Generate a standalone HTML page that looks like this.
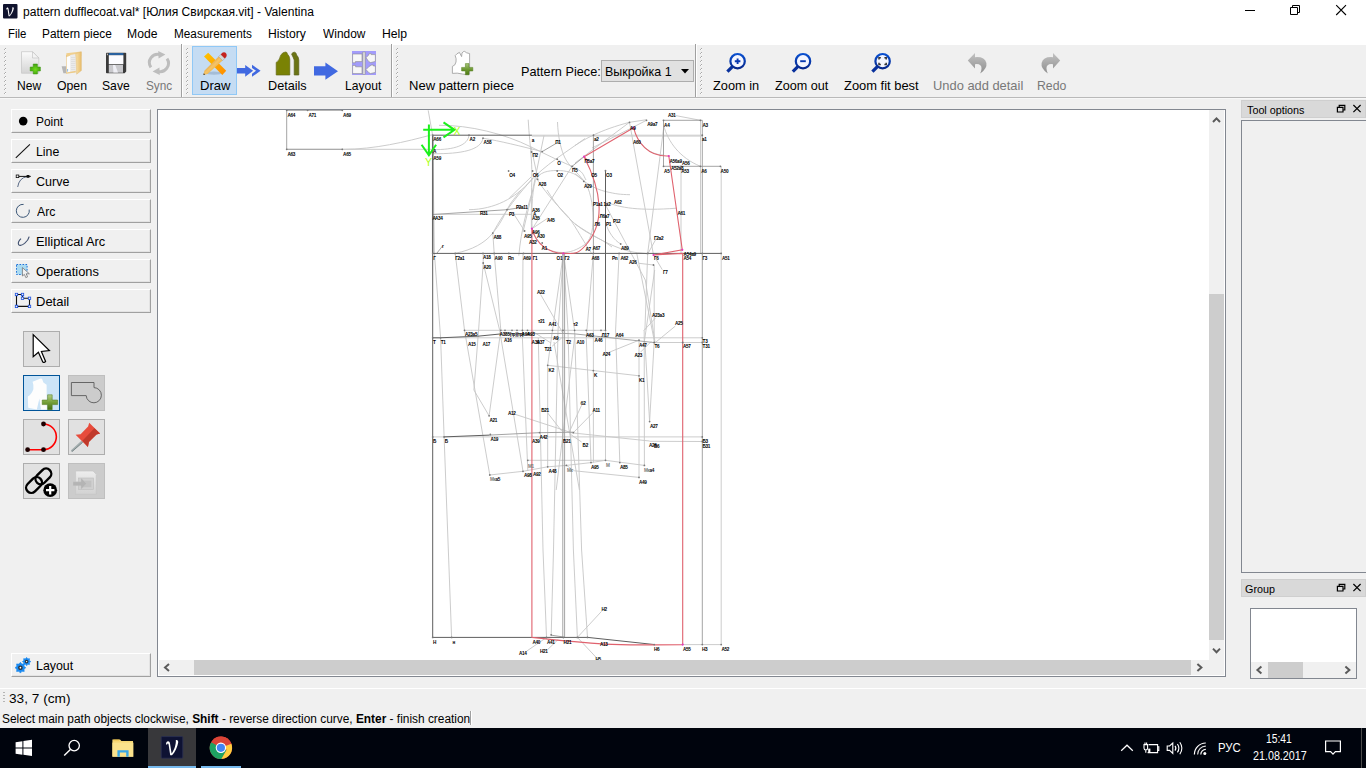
<!DOCTYPE html>
<html lang="ru">
<head>
<meta charset="utf-8">
<title>Valentina</title>
<style>
*{box-sizing:border-box;margin:0;padding:0}
html,body{width:1366px;height:768px;overflow:hidden;background:#f0f0f0}
body{position:relative;font-family:"Liberation Sans",sans-serif;color:#000;font-size:13px}
.abs{position:absolute}
.t{position:absolute;white-space:nowrap;line-height:1;display:block;transform-origin:0 0}
#titlebar{left:0;top:0;width:1366px;height:22px;background:#fff}
#menubar{left:0;top:22px;width:1366px;height:22px;background:#fff}
#tbline0{left:0;top:44px;width:1366px;height:1px;background:#fff}
#toolbar{left:0;top:45px;width:1366px;height:52px;background:#f0f0f0}
#tbline{left:0;top:97px;width:1366px;height:1px;background:#b9b9b9}
#tbline2{left:0;top:98px;width:1366px;height:1px;background:#f7f7f7}
.f12{font-size:12px}
.f13{font-size:13px}
.f11{font-size:11px}
.dis{color:#787878}
.handle{position:absolute;width:3px;top:48px;height:46px;background-image:repeating-linear-gradient(to bottom,#a8a8a8 0,#a8a8a8 1px,#fff 1px,#fff 2px,transparent 2px,transparent 4px),repeating-linear-gradient(to bottom,transparent 0,transparent 1px,#b0b0b0 1px,#b0b0b0 2px,transparent 2px,transparent 4px);background-size:1px 100%,1px 100%;background-position:1px 0,0 0;background-repeat:no-repeat}
.sep{position:absolute;top:44px;height:53px;width:2px;border-left:1px solid #a0a0a0;border-right:1px solid #fff}
.tbtn{position:absolute;left:11px;width:140px;height:24px;background:#f0f0f0;border-top:1px solid #fff;border-left:1px solid #fff;border-right:1px solid #a0a0a0;border-bottom:1px solid #a0a0a0;box-shadow:inset -1px -1px 0 #e3e3e3}
.ib{position:absolute;width:37px;height:36px;background:#e1e1e1;border:1px solid #adadad}
.ib.act{background:#cce4f7;border-color:#005499}
.ib.off{background:#cccccc;border-color:#bfbfbf}
.dockt{position:absolute;left:1241px;width:125px;height:18px;background:#d9d9d9;border:1px solid #cfcfcf}
#canvas{left:157px;top:109px;width:1069px;height:568px;background:#fff;border:1px solid #828790}
.sb{background:#f0f0f0;position:absolute}
.thumb{background:#cdcdcd;position:absolute}
#taskbar{left:0;top:728px;width:1366px;height:40px;background:#00040d}
svg{position:absolute;overflow:visible}
</style>
</head>
<body>
<div class="abs" id="titlebar"></div>
<div class="abs" id="menubar"></div>
<div class="abs" id="tbline0"></div>
<div class="abs" id="toolbar"></div>
<div class="abs" id="tbline"></div>
<div class="abs" id="tbline2"></div>

<!-- app icon -->
<svg style="left:3px;top:4px" width="15" height="15" viewBox="0 0 15 15">
  <rect x="0" y="0" width="14.5" height="14.5" rx="1" fill="#10132e"/>
  <path d="M3.2 5.2 C3.4 3.2 5.6 3 5.6 5.2 L6.6 11.6 C8 9.5 9.6 6 9.4 3.2 C10.4 3 11 3.6 10.8 4.6 C10.2 7.6 8.6 10.4 6.8 12.2 L5.6 12.2 L4.6 5.6 C4.5 4.8 3.9 4.8 3.9 5.5 Z" fill="#fff"/>
</svg>

<!-- window controls -->
<svg style="left:1240px;top:0" width="126" height="22" viewBox="0 0 126 22">
  <path d="M5 10.5H15" stroke="#000" stroke-width="1"/>
  <path d="M50.5 7.5H57.5V14.5H50.5Z M52.5 7.5V5.5H59.5V12.5H57.5" stroke="#000" stroke-width="1" fill="none"/>
  <path d="M96.2 5.2L106 15M106 5.2L96.2 15" stroke="#000" stroke-width="1.1"/>
</svg>

<!-- toolbar handles & separators -->
<div class="handle" style="left:4px"></div>
<div class="sep" style="left:181px"></div>
<div class="handle" style="left:186px"></div>
<div class="sep" style="left:391px"></div>
<div class="handle" style="left:396px"></div>
<div class="sep" style="left:695px"></div>
<div class="handle" style="left:700px"></div>

<!-- Draw button (checked) -->
<div class="abs" style="left:192px;top:46px;width:45px;height:49px;background:#c5dcf3;border:1px solid #90c8f6"></div>

<!-- combo box -->
<div class="abs" style="left:601px;top:60px;width:93px;height:22px;background:#e1e1e1;border:1px solid #adadad"></div>
<svg style="left:679.6px;top:68px" width="10" height="6" viewBox="0 0 10 6"><path d="M1 1H9L5 5.4Z" fill="#000"/></svg>
<!-- TOOLBAR ICONS -->
<svg style="left:0;top:0" width="1366" height="100" viewBox="0 0 1366 100">
<defs>
<linearGradient id="gdoc" x1="0" y1="0" x2="0" y2="1"><stop offset="0" stop-color="#fbfbfb"/><stop offset="1" stop-color="#d4d4d4"/></linearGradient>
<radialGradient id="gplus" cx=".5" cy=".55" r=".6"><stop offset="0" stop-color="#6fdc1a"/><stop offset="1" stop-color="#3f9a12"/></radialGradient>
<linearGradient id="gplus2" x1="0" y1="0" x2="0" y2="1"><stop offset="0" stop-color="#a9c77a"/><stop offset=".5" stop-color="#6f9a35"/><stop offset="1" stop-color="#4d7a12"/></linearGradient>
<linearGradient id="gfold" x1="0" y1="0" x2="1" y2="0"><stop offset="0" stop-color="#f7dfa8"/><stop offset="1" stop-color="#e9bd6a"/></linearGradient>
<linearGradient id="gpen" x1="0" y1="0" x2="1" y2="1"><stop offset="0" stop-color="#b8650c"/><stop offset=".5" stop-color="#f5c467"/><stop offset="1" stop-color="#d98a1c"/></linearGradient>
<linearGradient id="grul" x1="0" y1="0" x2="1" y2="1"><stop offset="0" stop-color="#ffc400"/><stop offset="1" stop-color="#ff8c00"/></linearGradient>
<linearGradient id="gmag" x1="0" y1="0" x2="0" y2="1"><stop offset="0" stop-color="#0a50d0"/><stop offset="1" stop-color="#06278c"/></linearGradient>
<linearGradient id="gundo" x1="0" y1="0" x2="0" y2="1"><stop offset="0" stop-color="#c2c2c2"/><stop offset="1" stop-color="#8e8e8e"/></linearGradient>
</defs>
<!-- New -->
<path d="M21.5 51.7H32.5L38.8 58V73.2H21.5Z" fill="url(#gdoc)" stroke="#c9c9c9" stroke-width=".8"/>
<path d="M32.5 51.7V58H38.8Z" fill="#f4f4f4" stroke="#bdbdbd" stroke-width=".6"/>
<path d="M33.2 64H37.4V67H40.4V71H37.4V74H33.2V71H30.2V67H33.2Z" fill="url(#gplus)" stroke="#3a9410" stroke-width=".5"/>
<!-- Open -->
<path d="M61.6 66.2 L66.4 66.2 L66.4 73.2 L63.4 73.2 Z" fill="#8f8f8f" opacity=".6"/>
<path d="M66.3 53.2 L81.2 51.6 V56 L66.3 57 Z" fill="#f0cf8e"/>
<path d="M66.3 55 L67 55 V73.4 L66.3 73.5 Z" fill="#e8c27a"/>
<path d="M66.8 57 L70.6 55.4 V72.2 L66.8 73.2 Z" fill="#fdfdfd"/>
<path d="M70.2 55 L75.8 54 V71.6 L70.2 72.6 Z" fill="#ececec"/>
<path d="M71 57.6h4.2M71 59.6h4.2M71 61.6h4.2M71 63.6h4.2M71 65.6h4.2M71 67.6h4.2M71 69.6h4.2" stroke="#d4d4d4" stroke-width=".6"/>
<path d="M66.3 72.4 L75.8 70.8 V72.6 L66.3 73.8 Z" fill="#eccb8a"/>
<path d="M75.8 53.6 L81.4 51.8 V70.6 L76.6 74.2 Z" fill="url(#gfold)" stroke="#dcb46c" stroke-width=".4"/>
<path d="M67.2 69 h.9 v2.6 l-.9 .2Z" fill="#7fb2e5"/>
<!-- Save -->
<path d="M106.8 52.8H125.4Q126.2 52.8 126.2 53.6V71.5L124.6 73.2H106.8Q106 73.2 106 72.4V53.6Q106 52.8 106.8 52.8Z" fill="#3a3a3a"/>
<rect x="108.8" y="53" width="14.6" height="2.2" fill="#2b629f"/>
<rect x="108.8" y="55.2" width="14.6" height="8.8" fill="#fcfcff"/>
<rect x="108.8" y="64" width="14.6" height=".9" fill="#6a6a6a"/>
<rect x="108.8" y="64.9" width="14.2" height="7.8" fill="#c9c9cd"/>
<path d="M113 65 L115.2 65 L118 72.6 L113.4 72.6 Z" fill="#eeeef4"/>
<rect x="106.9" y="53.6" width=".9" height="1.6" fill="#ddd"/>
<!-- Sync (disabled) -->
<g fill="none" stroke="#bdbdbd" stroke-width="3">
<path d="M150.9 67.4 A8.4 8.4 0 0 1 160.2 54.6"/>
<path d="M167 58.6 A8.4 8.4 0 0 1 157.8 71.4"/>
</g>
<path d="M158.2 51 L165.4 54.6 L158.6 58.6 Z" fill="#bdbdbd"/>
<path d="M159.8 75 L152.6 71.4 L159.4 67.4 Z" fill="#bdbdbd"/>
<!-- Draw -->
<ellipse cx="214" cy="73.2" rx="8" ry="1.6" fill="#7f97b5" opacity=".45"/>
<path d="M208.2 52.8 L226.2 70.8 L222.3 75 L204 56.6 Z" fill="url(#grul)"/>
<path d="M218.6 56.6 L222.6 60.6 L207.6 74 L203.4 75 L204.4 70.8 Z" fill="url(#gpen)"/>
<path d="M203.4 75 L203.8 73.2 L205.2 74.6 Z" fill="#222"/>
<path d="M218.6 56.6 L220.8 54.4 L224.8 58.4 L222.6 60.6 Z" fill="#d6d6d6" stroke="#8e8e8e" stroke-width=".4"/>
<path d="M220.8 54.4 Q222.6 51.6 225.2 52.6 Q227.6 54.4 226.2 57 L224.8 58.4 Z" fill="#c4221f"/>
<!-- arrow 1 -->
<path d="M237 68 H245.2 V64.9 L253.1 70.8 L245.2 76.7 V73.6 H237 Z" fill="#4169e1"/>
<path d="M252 64.8 L260.6 70.8 L252 76.8 V73.7 L256 70.8 L252 67.9 Z" fill="#4169e1"/>
<!-- Details -->
<path d="M276.2 75 V62.4 Q279.6 60.6 280.6 55.4 Q282.4 52.2 285.4 52 Q287.4 52 287.4 54 Q289.6 56 289.8 59 V75 Z" fill="#7a8204" stroke="#656b1a" stroke-width=".7"/>
<path d="M294.2 75 V60 Q293.2 57 291.6 54.2 Q292.4 52 294.6 52.2 Q296.4 52.6 296.6 55 Q298.8 57 298.8 60 V75 Z" fill="#6b7414" stroke="#5a611d" stroke-width=".7"/>
<!-- arrow 2 -->
<path d="M314 66.3 H325.4 V62.6 L338 71.2 L325.4 79.8 V75.6 H314 Z" fill="#4169e1"/>
<!-- Layout -->
<rect x="352" y="51" width="24" height="24" fill="#a39cfb"/>
<g fill="#f7f7f7" stroke="#8a8a8a" stroke-width=".6">
<path d="M352.6 54 H362 V61.6 H355.4 V62.8 H352.6 Z"/>
<path d="M352.6 65.4 H355.6 V66.8 H362 V73.6 H352.6 Z"/>
<path d="M366 57.6 L368.6 55.2 L369.2 53.6 H371.2 V54.6 H375.4 V61.4 L370.6 62.6 L368.6 61.4 Z"/>
<path d="M366 69.6 L369.2 66.4 L371.6 65 H373.4 V66 H375.4 V72.4 L370.4 73.6 L368.6 72.4 Z"/>
</g>
<rect x="362.8" y="52" width="2.4" height="22.4" fill="#d8d8d8" stroke="#8e8e8e" stroke-width=".5"/>
<!-- New pattern piece -->
<path d="M452.4 73.4 V66.4 Q455.4 65.6 456 62 Q456.6 58.6 455.2 55.6 Q456.6 53.6 459.4 52.4 L461.6 56.6 L462 53 Q463.2 51.2 464.6 51.4 Q466 53 469.6 53.6 V74.2 Q466 75 462.4 74 Q457 72.6 452.4 73.4 Z" fill="#fff" stroke="#9a9a9a" stroke-width=".8"/>
<path d="M465.4 63.6 H469 V67.4 H472.8 V71 H469 V74.8 H465.4 V71 H461.6 V67.4 H465.4 Z" fill="url(#gplus2)" stroke="#4f7a18" stroke-width=".5"/>
<!-- Zoom in -->
<g id="mag">
<path d="M732.4 66.6 L727.4 71.6" stroke="#08309c" stroke-width="3.2" stroke-linecap="butt"/>
<circle cx="737.6" cy="61.2" r="7.2" fill="#f4f6ff" stroke="url(#gmag)" stroke-width="2.2"/>
</g>
<path d="M734.8 61.2H740.4M737.6 58.4V64" stroke="#0838b0" stroke-width="1.9"/>
<!-- Zoom out -->
<path d="M797.8 66.6 L792.8 71.6" stroke="#08309c" stroke-width="3.2"/>
<circle cx="803" cy="61.2" r="7.2" fill="#f4f6ff" stroke="url(#gmag)" stroke-width="2.2"/>
<path d="M800.2 61.2H805.8" stroke="#0838b0" stroke-width="1.9"/>
<!-- Zoom fit -->
<path d="M877.4 66.6 L872.4 71.6" stroke="#08309c" stroke-width="3.2"/>
<circle cx="882.6" cy="61.2" r="7.2" fill="#f4f6ff" stroke="url(#gmag)" stroke-width="2.2"/>
<path d="M879 59.6V57.8H880.8M884.4 57.8H886.2V59.6M886.2 62.8V64.6H884.4M880.8 64.6H879V62.8" stroke="#333" stroke-width="1.5" fill="none"/>
<!-- Undo -->
<path d="M967.8 60.6 L975 53 V57.2 Q984.6 56.4 986.4 63 Q987.4 68.4 980.2 73.6 Q982.6 67.6 980.6 65.4 Q978.6 63.6 975 64.2 V68.4 Z" fill="url(#gundo)"/>
<!-- Redo -->
<path d="M1060.2 60.6 L1053 53 V57.2 Q1043.4 56.4 1041.6 63 Q1040.6 68.4 1047.8 73.6 Q1045.4 67.6 1047.4 65.4 Q1049.4 63.6 1053 64.2 V68.4 Z" fill="url(#gundo)"/>
</svg>
<!-- LEFT PANEL -->
<div class="tbtn" style="top:109px"></div>
<div class="tbtn" style="top:139px"></div>
<div class="tbtn" style="top:169px"></div>
<div class="tbtn" style="top:199px"></div>
<div class="tbtn" style="top:229px"></div>
<div class="tbtn" style="top:259px"></div>
<div class="tbtn" style="top:289px"></div>
<div class="tbtn" style="top:653px"></div>
<div class="ib" style="left:23px;top:331px"></div>
<div class="ib act" style="left:23px;top:375px"></div>
<div class="ib off" style="left:68px;top:375px"></div>
<div class="ib" style="left:23px;top:419px"></div>
<div class="ib" style="left:68px;top:419px"></div>
<div class="ib" style="left:23px;top:463px"></div>
<div class="ib off" style="left:68px;top:463px"></div>
<svg style="left:0;top:100px" width="157" height="590" viewBox="0 100 157 590">
<defs>
<linearGradient id="gplus3" x1="0" y1="0" x2="0" y2="1"><stop offset="0" stop-color="#b4cf86"/><stop offset=".5" stop-color="#76a03a"/><stop offset="1" stop-color="#456f10"/></linearGradient>
<linearGradient id="gpin" x1="0" y1="0" x2="1" y2="1"><stop offset="0" stop-color="#e8483c"/><stop offset=".5" stop-color="#e0443a"/><stop offset=".5" stop-color="#b5342c"/><stop offset="1" stop-color="#b5342c"/></linearGradient>
<linearGradient id="gdoc2" x1="0" y1="0" x2="0" y2="1"><stop offset="0" stop-color="#ededed"/><stop offset="1" stop-color="#d2d2d2"/></linearGradient>
</defs>
<!-- Point -->
<circle cx="23.2" cy="121.1" r="4.3" fill="#000"/>
<!-- Line -->
<path d="M15.8 157.8 L29.9 144.4" stroke="#111" stroke-width="1.1"/>
<!-- Curve -->
<path d="M17.7 187 Q19 178 27 176.6" stroke="#5a6a86" stroke-width="1" fill="none"/>
<path d="M17.5 176.4H30.8" stroke="#111" stroke-width="1"/>
<rect x="16.2" y="175" width="2.6" height="2.6" fill="#f0f0f0" stroke="#111" stroke-width=".8"/>
<rect x="26.6" y="175" width="2.8" height="2.8" fill="#111"/>
<!-- Arc -->
<path d="M23.6 204.4 A6.5 6.5 0 1 0 29.2 209.6" stroke="#3d5878" stroke-width="1" fill="none"/>
<!-- Elliptical arc -->
<path d="M21 238.6 Q17.4 242 18.6 244.6 Q20.4 246.6 24.6 243.4 Q28.4 240.2 29.2 236.6" stroke="#3f4f6f" stroke-width="1.1" fill="none"/>
<!-- Operations -->
<rect x="16.5" y="264.5" width="10.6" height="10" fill="#a9daf2" stroke="#1f72d8" stroke-width="1" stroke-dasharray="1.6 1.4"/>
<path d="M22.4 267.6 L22.4 276 L24.4 274.4 L25.8 277.6 L27.6 276.8 L26.2 273.8 L29.4 273.8 Z" fill="#f2f2f2" stroke="#666" stroke-width=".7"/>
<!-- Detail -->
<path d="M16.5 294.5 H22.5 V298.3 H29.5 V306.4 H16.5 Z" fill="none" stroke="#111" stroke-width="1.1"/>
<g fill="#f0f0f0" stroke="#1a4fe0" stroke-width=".8">
<rect x="15.3" y="293.3" width="2.4" height="2.4"/><rect x="21.3" y="293.3" width="2.4" height="2.4"/><rect x="21.3" y="297.1" width="2.4" height="2.4"/><rect x="28.3" y="297.1" width="2.4" height="2.4"/><rect x="28.3" y="305.2" width="2.4" height="2.4"/><rect x="15.3" y="305.2" width="2.4" height="2.4"/>
</g>
<!-- Layout gears -->
<path d="M20.40 662.30L21.89 664.10L24.22 663.88L24.00 666.21L25.80 667.70L24.00 669.19L24.22 671.52L21.89 671.30L20.40 673.10L18.91 671.30L16.58 671.52L16.80 669.19L15.00 667.70L16.80 666.21L16.58 663.88L18.91 664.10Z" fill="#1b8af0" stroke="#1b8af0" stroke-width=".6" stroke-linejoin="round"/>
<path d="M26.60 657.40L27.75 658.83L29.57 658.63L29.37 660.45L30.80 661.60L29.37 662.75L29.57 664.57L27.75 664.37L26.60 665.80L25.45 664.37L23.63 664.57L23.83 662.75L22.40 661.60L23.83 660.45L23.63 658.63L25.45 658.83Z" fill="#1b8af0" stroke="#1b8af0" stroke-width=".6" stroke-linejoin="round"/>
<circle cx="20.4" cy="667.7" r="2.3" fill="#2f3338"/><circle cx="20.4" cy="667.7" r=".85" fill="#fff"/>
<circle cx="26.6" cy="661.6" r="1.8" fill="#2f3338"/><circle cx="26.6" cy="661.6" r=".7" fill="#fff"/>
<!-- Arrow cursor -->
<path d="M33.2 334.6 V356.6 L38.4 352.2 L42.8 362 Q44.4 363 45.6 361.4 L41.4 351.4 L49.4 350.6 Z" fill="#fff" stroke="#000" stroke-width="1.2" stroke-linejoin="miter"/>
<!-- Add detail (active) -->
<path d="M32.6 381.8 L40.6 378.4 L42 378.8 L43.4 382.6 L46.6 384.8 L46.8 409.6 L41 409.6 L39.4 398.6 L36.8 409.4 L28.2 407.8 L27.8 396.6 Q32 394 33.4 389 Q33.8 385 32.6 381.8 Z" fill="#fdfdfd"/>
<path d="M47.6 394.8 H52.2 V400 H57.6 V404.6 H52.2 V409.8 H47.6 V404.6 H42.2 V400 H47.6 Z" fill="url(#gplus3)" stroke="#4b7416" stroke-width=".5"/>
<!-- Internal path (disabled) -->
<path d="M71.4 382.5 H94 V387.6 A7.6 7.6 0 1 1 86.2 395.6 H71.4 Z" fill="none" stroke="#5a5a5a" stroke-width=".9"/>
<!-- Path tool -->
<path d="M27.6 449.7 H43.5 A12.85 12.85 0 0 0 43.5 424" fill="none" stroke="#f00" stroke-width="1.6"/>
<circle cx="43.5" cy="424" r="2.4" fill="#1c0000"/><circle cx="27.6" cy="449.7" r="2.4" fill="#1c0000"/><circle cx="43.5" cy="449.7" r="2.4" fill="#1c0000"/>
<!-- Pin -->
<path d="M81.8 441.8 L72 450.8" stroke="#a3adae" stroke-width="2" stroke-linecap="round"/>
<path d="M82.4 442.6 L72.4 451.2" stroke="#6f7b7c" stroke-width=".8" stroke-linecap="round"/>
<path d="M89.2 422.7 L100.1 433.6 L96.5 434.5 L88.9 442 L87.9 447.1 L75.6 434.7 L80.6 434.2 L88.1 426.6 Z" fill="#e74c3c"/>
<path d="M94.4 428.2 L100.1 433.6 L96.5 434.5 L88.9 442 L87.9 447.1 L82.4 440.7 Z" fill="#c0392b"/>
<!-- Chain -->
<g fill="none" stroke="#000" stroke-width="2.4">
<rect x="-5.2" y="-9" width="10.4" height="18" rx="5.2" transform="translate(43.4 476.4) rotate(45)"/>
<rect x="-5.2" y="-9" width="10.4" height="18" rx="5.2" transform="translate(34 485) rotate(45)"/>
</g>
<circle cx="50.2" cy="490.2" r="6.9" fill="#000"/>
<path d="M46 490.2H54.4M50.2 486V494.4" stroke="#fff" stroke-width="2.2"/>
<!-- last disabled -->
<path d="M75.6 471 H93 L96.2 474.2 V494.4 H75.6 Z" fill="url(#gdoc2)" stroke="#c4c4c4" stroke-width=".6"/>
<rect x="78.6" y="478" width="15" height="11.6" fill="#d0d0d0" stroke="#bdbdbd" stroke-width=".6"/>
<rect x="82" y="480.6" width="9.4" height="6.6" fill="#c2c2c2"/>
<path d="M73 481.8 H81 V478 L86.6 483.6 L81 489.4 V485.8 H73 Z" fill="#b4b4b4" stroke="#c9c9c9" stroke-width=".4"/>
</svg>
<!-- CANVAS FRAME -->
<div class="abs" id="canvas"></div>
<!-- h scrollbar -->
<div class="sb" style="left:159px;top:660px;width:1065px;height:15px"></div>
<div class="thumb" style="left:194px;top:660px;width:997px;height:15px"></div>
<!-- v scrollbar -->
<div class="sb" style="left:1209px;top:110px;width:15px;height:565px"></div>
<div class="thumb" style="left:1209px;top:294px;width:15px;height:346px"></div>
<svg style="left:157px;top:109px" width="1069" height="568" viewBox="157 109 1069 568">
<g fill="none" stroke="#5a5a5a" stroke-width="2">
<path d="M169 664 L165 667.5 L169 671"/>
<path d="M1197.4 664 L1201.4 667.5 L1197.4 671"/>
<path d="M1213 122 L1216.5 118.4 L1220 122"/>
<path d="M1213 648.6 L1216.5 652.2 L1220 648.6"/>
</g>
</svg>

<!-- RIGHT DOCKS -->
<div class="dockt" style="top:100px"></div>
<div class="abs" style="left:1241px;top:120px;width:130px;height:453px;border:1px solid #828790;background:#f0f0f0"></div>
<div class="dockt" style="top:579px"></div>
<div class="abs" style="left:1250px;top:608px;width:107px;height:71px;border:1px solid #828790;background:#fff"></div>
<div class="sb" style="left:1251px;top:662px;width:105px;height:16px"></div>
<div class="thumb" style="left:1268px;top:662px;width:35px;height:16px"></div>
<svg style="left:1240px;top:98px" width="126" height="590" viewBox="1240 98 126 590">
<g fill="none" stroke="#000" stroke-width="1.2">
<path d="M1337.4 107.4 H1343 V112 H1337.4 Z M1339.2 107.4 V105.4 H1344.8 V110 H1343"/>
<path d="M1353.4 105 L1360.6 112.2 M1360.6 105 L1353.4 112.2"/>
<path d="M1337.4 586.4 H1343 V591 H1337.4 Z M1339.2 586.4 V584.4 H1344.8 V589 H1343"/>
<path d="M1353.4 584 L1360.6 591.2 M1360.6 584 L1353.4 591.2"/>
</g>
<g fill="none" stroke="#5a5a5a" stroke-width="2">
<path d="M1261.4 666.4 L1257.4 670 L1261.4 673.6"/>
<path d="M1345.4 666.4 L1349.4 670 L1345.4 673.6"/>
</g>
</svg>

<!-- STATUS BAR -->
<div class="abs" style="left:0;top:688px;width:1366px;height:1px;background:#fff"></div>
<div class="abs" style="left:3px;top:692px;width:2px;height:12px;background-image:repeating-linear-gradient(to bottom,#b5b5b5 0,#b5b5b5 1px,transparent 1px,transparent 3px)"></div>
<div class="abs" style="left:470px;top:711px;width:1px;height:14px;background:#a0a0a0"></div>
<div class="abs" style="left:471px;top:711px;width:1px;height:14px;background:#fff"></div>
<svg style="left:158px;top:110px;overflow:hidden" width="1051" height="550" viewBox="158 110 1051 550">
<g fill="none" stroke-linecap="butt">
<path stroke="#c6c6c6" stroke-width="0.9" d="M286.7 149.3L432.7 149.3M343 149.3C375 149.3 405 142 432.6 134.6M531.9 135.2L702.3 135.2M531.9 136.1L702.3 136.1M432.7 337.8L702.3 337.8M432.7 436.9L702.3 436.9M428.2 110.3L432.6 135.0L433.6 200.0L434.4 253.0L440.6 337.8L444.1 436.9L451.6 637.4M700.5 120.3L700.5 253.4M721.2 166.3L721.2 644.6M681.0 166.3L681.0 253.4M593.4 253.4L593.4 462.6M605.5 331.0L605.5 460.3M531.4 200.0L531.4 228.0M675.8 115.6L700.4 120.3M663.5 125C668 142 680 158 700.4 166.3M682.7 644.6L721.2 644.6M654.0 342.5L702.3 342.5M649.6 441.3L702.3 441.5M469 135.2C468 145 455 150 432.7 149.6M483 138.2C481 150 462 154 432.7 153.7M439 125.3C470 125 505 134 530.5 146.7S560 161 572 166.3S583 175 586 180M483 138.2C500 141 520 146 542.2 151.6M528.2 119.7C529 135 530.5 146 531.4 160S531.6 180 531.4 200M557.5 122C558 137 561 150 565 158S576 171 584 181M544.0 135.5L531.0 198.0M531.0 198.0L523.0 232.0M531 146.7L538.4 181.4C548 196 560 208 566.6 215S580 236 592 254M469 209.7C495 209.3 515 198 530 181.5S565 153 585 138.5M575 145.5C585 139 600 130 629.5 122.3L646.5 119.7M575.0 163.0L629.5 122.3M592.0 148.0L646.5 120.3M532.2 229C531.5 215 531.5 195 535.3 180.6C539 172 548 170.5 557.2 170.5C565 170.5 575 172 583.8 180.6C590 188 593 205 593.1 218C593.2 232 590 241 584.5 244.7C577 250 570 252.5 562.7 252.5C553 252.5 546 249 541.6 244.7C537 240 533.5 235 532.2 229M531 177L509.4 198M533 178C520 193 505 210 492.8 233.1M629.5 122.3L653.5 255.0M663.5 129.0L647.7 253.3M647.7 253.3L644.9 330.0M640.6 143C648 152 656 155 664 155M575 173.6C585 183 595 189 605.5 191.5S620 194.5 630 194.7M605.5 201.7C620 208 640 211 676.4 208.2M605.5 205.0L645.3 280.0M645.3 280.0L655.0 342.0M575 224C590 234 605 243 620.7 248.6S640 252 647.7 254M656.0 239.0L647.7 254.0M653.5 255.0L662.3 269.7M639.0 263.3L653.5 265.0M605.5 223C609 233 614 240 620.7 244M432.7 214.3L531.9 214.3M455.2 253.3C472 250 485 243 492.8 233.1S503 218 507 209.7S516 197 521 190M531.9 228.7L548.0 218.0M492.8 233.1L494.2 253.4M494.2 253.4L500.8 330.0M514.0 214.3L524.6 231.0M532.9 190C528 205 521 230 518.8 255.6M572.1 166.3L532.2 229.0M547 190C556 205 570 222 585 231S600 238 612 247M455.2 253.4L464.5 330.3M464.5 330.3L489.8 475.0M483.2 263.0L478.6 330.0M478.6 330.0L473.9 390.0M473.9 390.0L489.1 415.8M483.2 263.0L499.6 330.0M499.6 330.0L523.0 471.3M483.2 253.4L483.2 263.0M500.8 330.0L489.1 415.8M523.0 253.4L522.4 337.8M522.4 337.8L527.8 471.0M563.4 253.4L552.4 330.8M552.4 330.8L547.7 365.0M563.4 253.4L574.6 330.8M574.6 330.8L581.6 550.0M581.6 550.0L587.5 637.4M563.4 253.4L568.0 330.8M568.0 330.8L573.4 550.0M573.4 550.0L577.4 637.4M563.4 253.4L558.0 330.8M558.0 330.8L553.5 550.0M553.5 550.0L551.2 634.8M593.4 253.4L586.3 337.8M586.3 337.8L591.0 462.0M619.1 253.4L615.6 330.0M615.6 330.0L619.8 462.6M636.7 253.0L654.7 342.7M644.2 330.4L644.4 465.4M654.7 270.0L644.2 342.7M654.2 265.2L654.2 342.0M654.2 342.0L649.6 421.6M639.0 340.0L639.0 477.0M644.9 342.0L649.6 421.6M540.6 294.5L562.9 333.2M464.5 330.3L605.0 330.3M561.6 338.0L552.2 346.2M640.7 352.0L651.2 341.5M607.4 353.0L639.0 340.2M643.7 330.8L655.4 318.0M655.4 342.5L675.3 326.1M547.7 365.3L639.0 375.8M547.7 365.3L547.7 466.8M538.3 338.0L543.0 550.0M543.0 550.0L546.5 637.0M532.0 331.0L551.0 343.0M554.0 342.0L579.4 490.0M575.0 334.4L556.2 490.0M516.0 414.6L573.4 433.3M547.7 413.0L561.7 431.0M581.6 405.2L569.2 432.2M593.3 412.3L573.4 432.6M570.0 434.0L581.6 442.0M573.4 433.0L649.6 441.0M527.8 460.3L605.5 460.3M605.5 460.3L644.4 465.4M489.8 475.0L523.0 471.3L547.7 466.8L566.4 465.4L591.0 462.6L605.5 460.3M566.4 465.4L574.6 470.8M574.6 470.8L639.0 477.4M601.5 611.4L577.4 637.4M577.4 637.4L596.9 658.2M526.6 651.2L546.5 637.5M547.7 649.5L558.2 639.5"/>
<path stroke="#9a9a9a" stroke-width="0.9" d="M286.7 110.3L286.7 149.3M286.7 110.3L343.0 110.3M286.7 149.3L343.0 149.3M702.3 120.3L702.3 644.6M593.4 135.2L593.4 253.4M562.8 253.4L562.8 637.4M564.6 253.4L564.6 637.4M663.5 120.3L702.3 120.3M663.5 120.3L663.5 166.3M663.5 166.3L720.4 166.3M557.5 142.6L542.2 151.6M584.1 156.7L572.1 166.3M432.7 214.5L507 209.7L522 207.4M437.0 253.0L442.5 246.0M500 334L563 333.4L575 333.9L638.9 340.9L655.3 342.7M489.5 435.1L538.7 432.7L573.4 432.2M550.7 635.1L563.0 636.9"/>
<path stroke="#5e5e5e" stroke-width="1.0" d="M432.7 135.2L531.9 135.2M432.7 253.4L432.7 637.4M432.7 253.4L721.2 253.4M432.7 637.4L531.9 637.4M605.5 170.7L605.5 331.0M432.7 337.8L440 337.8L477.8 336.2L500 334M443.8 436.9L489.5 435.1M531.9 637.4L587.7 637.4L653.9 644.5"/>
<path stroke="#686868" stroke-width="1.5" d="M432.7 135.2L432.7 253.4"/>
<path stroke="#e0626e" stroke-width="1.1" d="M584.1 156.7L633.6 127.7M633.6 127.7C637 142 648 157 668.8 156M668.8 156L682.3 249.8L653.5 255L682.7 253.4L682.7 644.6M584.1 156.7C592 172 598 188 599 205S594 236 585 246S572 253 563.4 253.4M563.4 253.4C550 253.4 536 245 531.9 228.7L531.9 637.4M531.9 637.4C560 640.5 585 643 604.6 644.1S640 644.8 653.9 644.9L682.7 644.8M584.1 156.7L588.5 161.5"/>
</g>
<g fill="#7a7a7a"><circle cx="286.7" cy="110.3" r="0.9"/><circle cx="307.6" cy="110.3" r="0.9"/><circle cx="342.3" cy="110.3" r="0.9"/><circle cx="286.7" cy="149.3" r="0.9"/><circle cx="342.3" cy="149.3" r="0.9"/><circle cx="432.7" cy="135.2" r="0.9"/><circle cx="469.0" cy="135.2" r="0.9"/><circle cx="483.0" cy="138.2" r="0.9"/><circle cx="432.7" cy="153.7" r="0.9"/><circle cx="508.6" cy="171.0" r="0.9"/><circle cx="531.5" cy="152.0" r="0.9"/><circle cx="557.2" cy="159.2" r="0.9"/><circle cx="572.1" cy="166.3" r="0.9"/><circle cx="557.2" cy="171.0" r="0.9"/><circle cx="532.6" cy="171.0" r="0.9"/><circle cx="537.5" cy="179.3" r="0.9"/><circle cx="542.2" cy="151.6" r="0.9"/><circle cx="646.5" cy="120.3" r="0.9"/><circle cx="629.5" cy="122.3" r="0.9"/><circle cx="593.5" cy="135.2" r="0.9"/><circle cx="663.5" cy="120.3" r="0.9"/><circle cx="700.4" cy="120.3" r="0.9"/><circle cx="702.3" cy="135.2" r="0.9"/><circle cx="663.5" cy="166.3" r="0.9"/><circle cx="700.4" cy="166.3" r="0.9"/><circle cx="720.4" cy="166.3" r="0.9"/><circle cx="681.0" cy="166.3" r="0.9"/><circle cx="605.5" cy="170.7" r="0.9"/><circle cx="583.8" cy="181.3" r="0.9"/><circle cx="432.7" cy="253.4" r="0.9"/><circle cx="455.2" cy="253.4" r="0.9"/><circle cx="483.0" cy="253.4" r="0.9"/><circle cx="483.2" cy="263.0" r="0.9"/><circle cx="494.2" cy="253.4" r="0.9"/><circle cx="508.8" cy="253.4" r="0.9"/><circle cx="523.5" cy="253.4" r="0.9"/><circle cx="492.8" cy="233.1" r="0.9"/><circle cx="542.2" cy="243.0" r="0.9"/><circle cx="507.0" cy="209.7" r="0.9"/><circle cx="524.6" cy="231.0" r="0.9"/><circle cx="593.4" cy="253.4" r="0.9"/><circle cx="619.1" cy="253.4" r="0.9"/><circle cx="647.7" cy="253.4" r="0.9"/><circle cx="702.3" cy="253.4" r="0.9"/><circle cx="721.2" cy="253.4" r="0.9"/><circle cx="620.7" cy="244.0" r="0.9"/><circle cx="653.5" cy="265.0" r="0.9"/><circle cx="432.7" cy="337.8" r="0.9"/><circle cx="440.6" cy="337.8" r="0.9"/><circle cx="464.5" cy="330.3" r="0.9"/><circle cx="500.8" cy="330.3" r="0.9"/><circle cx="505.0" cy="330.3" r="0.9"/><circle cx="512.0" cy="330.3" r="0.9"/><circle cx="517.0" cy="330.3" r="0.9"/><circle cx="522.4" cy="330.3" r="0.9"/><circle cx="527.5" cy="330.3" r="0.9"/><circle cx="552.4" cy="330.3" r="0.9"/><circle cx="563.0" cy="330.3" r="0.9"/><circle cx="574.6" cy="330.3" r="0.9"/><circle cx="586.3" cy="330.3" r="0.9"/><circle cx="601.0" cy="330.3" r="0.9"/><circle cx="605.5" cy="330.3" r="0.9"/><circle cx="547.7" cy="365.3" r="0.9"/><circle cx="593.3" cy="370.6" r="0.9"/><circle cx="639.0" cy="375.8" r="0.9"/><circle cx="639.0" cy="340.2" r="0.9"/><circle cx="654.2" cy="342.5" r="0.9"/><circle cx="682.7" cy="342.5" r="0.9"/><circle cx="702.3" cy="337.8" r="0.9"/><circle cx="702.3" cy="342.5" r="0.9"/><circle cx="432.7" cy="436.9" r="0.9"/><circle cx="444.1" cy="436.9" r="0.9"/><circle cx="489.1" cy="415.8" r="0.9"/><circle cx="649.6" cy="421.6" r="0.9"/><circle cx="490.3" cy="434.5" r="0.9"/><circle cx="539.5" cy="432.6" r="0.9"/><circle cx="573.4" cy="432.6" r="0.9"/><circle cx="527.8" cy="460.3" r="0.9"/><circle cx="605.5" cy="460.3" r="0.9"/><circle cx="591.0" cy="462.6" r="0.9"/><circle cx="619.8" cy="462.6" r="0.9"/><circle cx="644.4" cy="465.4" r="0.9"/><circle cx="489.8" cy="475.0" r="0.9"/><circle cx="523.0" cy="471.3" r="0.9"/><circle cx="547.7" cy="466.8" r="0.9"/><circle cx="566.4" cy="465.4" r="0.9"/><circle cx="639.0" cy="477.4" r="0.9"/><circle cx="702.3" cy="436.9" r="0.9"/><circle cx="702.3" cy="441.5" r="0.9"/><circle cx="432.7" cy="637.4" r="0.9"/><circle cx="451.6" cy="637.4" r="0.9"/><circle cx="546.5" cy="637.5" r="0.9"/><circle cx="563.4" cy="637.5" r="0.9"/><circle cx="577.4" cy="637.4" r="0.9"/><circle cx="587.5" cy="637.4" r="0.9"/><circle cx="654.2" cy="644.6" r="0.9"/><circle cx="702.3" cy="644.6" r="0.9"/><circle cx="721.2" cy="644.6" r="0.9"/><circle cx="551.2" cy="634.8" r="0.9"/></g>
<g fill="#e23ac0"><circle cx="584.1" cy="156.7" r="1.1"/><circle cx="633.6" cy="127.7" r="1.1"/><circle cx="668.8" cy="156.0" r="1.1"/><circle cx="682.3" cy="249.8" r="1.1"/><circle cx="653.5" cy="255.0" r="1.1"/><circle cx="531.9" cy="228.7" r="1.1"/><circle cx="563.4" cy="253.4" r="1.1"/><circle cx="682.7" cy="644.6" r="1.1"/></g>
<g fill="none" stroke="#1cf01c" stroke-width="2"><path d="M423.2 129.8H454M428.9 124.4V154.6M443.5 122.4L454.5 129.8L443.5 137.3M421.6 144.7L428.9 155.2L436.1 144.7"/></g>
<g font-family="'Liberation Sans',sans-serif" font-size="10.4" fill="#aaff10"><text x="453.4" y="134.6">X</text><text x="424.9" y="165.5">Y</text></g>
<g font-family="'Liberation Sans','DejaVu Sans',sans-serif" font-size="4.7" font-weight="bold" fill="#000" style="letter-spacing:-0.33px">
<text x="287.5" y="116.9">A64</text>
<text x="308.4" y="116.9">A71</text>
<text x="343.1" y="116.9">A69</text>
<text x="287.5" y="155.9">A63</text>
<text x="343.1" y="155.9">A65</text>
<text x="433.3" y="141.0">A66</text>
<text x="469.6" y="141.0">A2</text>
<text x="483.6" y="144.0">A58</text>
<text x="531.7" y="142.0">а</text>
<text x="433.3" y="159.9">A59</text>
<text x="433.0" y="152.6">А</text>
<text x="509.2" y="176.8">O4</text>
<text x="555.2" y="144.4">П1</text>
<text x="532.5" y="157.4">П2</text>
<text x="557.2" y="165.2">O</text>
<text x="572.1" y="172.3">П5</text>
<text x="557.2" y="177.0">O2</text>
<text x="532.8" y="177.0">O6</text>
<text x="538.3" y="185.8">A28</text>
<text x="584.5" y="163.2">П5a7</text>
<text x="630.1" y="130.2">A9</text>
<text x="647.3" y="126.1">A9a7</text>
<text x="593.9" y="141.2">a2</text>
<text x="664.1" y="126.9">A4</text>
<text x="702.4" y="126.9">A3</text>
<text x="668.0" y="116.6">A31</text>
<text x="702.1" y="141.2">a1</text>
<text x="669.5" y="162.6">A56a9</text>
<text x="682.0" y="165.4">A56</text>
<text x="671.0" y="170.4">A52a8</text>
<text x="664.1" y="173.3">A5</text>
<text x="701.2" y="173.3">A6</text>
<text x="720.6" y="173.3">A50</text>
<text x="681.2" y="173.3">A53</text>
<text x="633.0" y="144.4">A60</text>
<text x="591.3" y="177.3">O5</text>
<text x="606.1" y="177.3">O3</text>
<text x="584.0" y="187.9">A29</text>
<text x="433.3" y="259.8">Г</text>
<text x="442.0" y="247.6">г</text>
<text x="455.2" y="260.0">Г2a1</text>
<text x="483.0" y="259.0">A18</text>
<text x="483.2" y="269.4">A20</text>
<text x="494.6" y="260.0">A90</text>
<text x="508.0" y="260.0">Rn</text>
<text x="522.9" y="260.0">A69</text>
<text x="532.7" y="260.0">Г1</text>
<text x="556.6" y="260.0">O1</text>
<text x="564.6" y="260.0">Г2</text>
<text x="493.4" y="239.3">A88</text>
<text x="435.0" y="220.2">A34</text>
<text x="432.4" y="220.2">А</text>
<text x="480.0" y="215.2">R31</text>
<text x="509.0" y="216.2">P3</text>
<text x="516.0" y="209.2">P2a11</text>
<text x="532.0" y="212.4">A36</text>
<text x="532.0" y="220.4">A35</text>
<text x="533.0" y="216.0">А</text>
<text x="547.0" y="222.4">A45</text>
<text x="524.0" y="237.6">A95</text>
<text x="532.0" y="233.6">A96</text>
<text x="537.0" y="238.4">A30</text>
<text x="529.0" y="244.0">A32</text>
<text x="541.6" y="249.6">A1</text>
<text x="593.0" y="206.4">P1a1</text>
<text x="603.6" y="206.4">1a2</text>
<text x="614.0" y="204.4">A62</text>
<text x="599.6" y="218.4">Л6a7</text>
<text x="613.0" y="223.2">P12</text>
<text x="594.6" y="226.4">Л6</text>
<text x="606.0" y="226.4">P1</text>
<text x="654.0" y="239.6">Г2a2</text>
<text x="677.4" y="215.2">A61</text>
<text x="585.4" y="251.2">A7</text>
<text x="592.4" y="249.6">A67</text>
<text x="621.0" y="250.4">A89</text>
<text x="591.4" y="260.0">A68</text>
<text x="612.0" y="260.0">Рn</text>
<text x="620.4" y="260.0">A62</text>
<text x="629.0" y="264.4">A26</text>
<text x="654.0" y="260.0">Г6</text>
<text x="683.6" y="256.0">A54a9</text>
<text x="683.4" y="260.0">A54</text>
<text x="702.4" y="260.0">Г3</text>
<text x="722.0" y="260.0">A51</text>
<text x="663.0" y="274.0">Г7</text>
<text x="433.1" y="344.4">T</text>
<text x="440.8" y="344.4">T1</text>
<text x="465.0" y="336.4">A23a5</text>
<text x="468.0" y="346.0">A15</text>
<text x="482.4" y="346.0">A17</text>
<text x="499.6" y="335.6">A38</text>
<text x="507.4" y="336.0">5(тр)(тр)</text>
<text x="521.6" y="335.6">A94</text>
<text x="527.0" y="335.6">A93</text>
<text x="504.0" y="342.4">A16</text>
<text x="531.6" y="344.0">A39</text>
<text x="536.6" y="344.0">A37</text>
<text x="553.0" y="339.6">A9</text>
<text x="566.0" y="344.0">T2</text>
<text x="576.4" y="344.0">A10</text>
<text x="544.4" y="351.2">T21</text>
<text x="586.0" y="336.8">A63</text>
<text x="601.6" y="336.8">Л17</text>
<text x="615.6" y="336.8">A64</text>
<text x="594.6" y="342.4">A46</text>
<text x="639.0" y="346.8">A47</text>
<text x="654.4" y="348.4">T6</text>
<text x="683.0" y="348.4">A57</text>
<text x="702.6" y="343.2">T3</text>
<text x="702.6" y="348.4">T31</text>
<text x="602.4" y="356.0">A24</text>
<text x="634.4" y="357.0">A23</text>
<text x="652.0" y="317.0">A23a3</text>
<text x="675.0" y="325.2">A25</text>
<text x="537.0" y="294.0">A22</text>
<text x="538.0" y="323.2">т21</text>
<text x="548.6" y="326.0">A41</text>
<text x="573.2" y="326.0">т2</text>
<text x="548.6" y="372.0">K2</text>
<text x="594.0" y="377.0">K</text>
<text x="639.0" y="382.0">K1</text>
<text x="432.9" y="443.3">Б</text>
<text x="444.7" y="443.3">Б</text>
<text x="489.4" y="422.0">A21</text>
<text x="508.0" y="415.0">A12</text>
<text x="541.2" y="412.0">Б21</text>
<text x="580.6" y="405.0">б2</text>
<text x="592.4" y="412.0">A11</text>
<text x="650.0" y="428.0">A27</text>
<text x="490.4" y="441.0">A19</text>
<text x="532.0" y="443.0">A39</text>
<text x="539.6" y="439.0">A42</text>
<text x="563.0" y="443.0">Б21</text>
<text x="582.6" y="447.0">Б2</text>
<text x="649.0" y="447.0">A26</text>
<text x="654.0" y="448.0">Б6</text>
<text x="702.4" y="443.0">Б3</text>
<text x="702.4" y="448.4">Б31</text>
<text x="528.0" y="467.6" fill="#787c78">M1</text>
<text x="591.0" y="469.0">A95</text>
<text x="606.0" y="467.0" fill="#787c78">M</text>
<text x="620.0" y="469.0">A85</text>
<text x="644.0" y="472.0" fill="#787c78"><tspan fill="#787c78">Mк</tspan><tspan fill="#111">a4</tspan></text>
<text x="490.0" y="481.0" fill="#787c78"><tspan fill="#787c78">Mк</tspan><tspan fill="#111">a5</tspan></text>
<text x="524.0" y="477.0">A98</text>
<text x="533.0" y="476.0">A92</text>
<text x="548.6" y="473.0">A48</text>
<text x="567.0" y="472.0" fill="#787c78">Mк</text>
<text x="639.0" y="484.0">A49</text>
<text x="433.1" y="644.0">H</text>
<text x="452.4" y="644.0">н</text>
<text x="532.4" y="643.6">A40</text>
<text x="547.0" y="643.6">A41</text>
<text x="563.6" y="643.6">H21</text>
<text x="600.0" y="646.0">A13</text>
<text x="654.0" y="650.6">H6</text>
<text x="683.0" y="650.6">A55</text>
<text x="702.0" y="650.6">H3</text>
<text x="721.4" y="650.6">A52</text>
<text x="601.4" y="610.6">H2</text>
<text x="519.0" y="654.6">A14</text>
<text x="540.0" y="652.6">H21</text>
<text x="595.4" y="660.5">H5</text>
</g></svg>
<!-- TASKBAR -->
<div class="abs" id="taskbar"></div>
<div class="abs" style="left:148px;top:728px;width:48px;height:38px;background:#38383b"></div>
<div class="abs" style="left:148px;top:766px;width:48px;height:2px;background:#76b9ed"></div>
<div class="abs" style="left:201px;top:766px;width:40px;height:2px;background:#76b9ed"></div>
<div class="abs" style="left:1361px;top:728px;width:1px;height:40px;background:#4a4a4a"></div>
<svg style="left:0;top:728px" width="1366" height="40" viewBox="0 728 1366 40">
<!-- windows logo -->
<path d="M15.6 742.2 L22.4 741.2 V747.4 H15.6 Z M23.4 741.05 L32 739.8 V747.4 H23.4 Z M15.6 748.4 H22.4 V754.7 L15.6 753.7 Z M23.4 748.4 H32 V756 L23.4 754.8 Z" fill="#fff"/>
<!-- search -->
<circle cx="74.2" cy="745.6" r="5.2" fill="none" stroke="#fff" stroke-width="1.3"/>
<path d="M70.4 749.4 L64.2 755.6" stroke="#fff" stroke-width="1.4"/>
<!-- folder -->
<path d="M112.4 739.4 H120 L121.4 741 H133 V756.6 H112.4 Z" fill="#f7d775"/>
<path d="M112.4 742.6 H133.4 V756.8 H112.4 Z" fill="#fbe28c"/>
<path d="M113.4 739.6 H119 V740.4 H113.4Z" fill="#e9b93b"/>
<path d="M117.4 756.8 V750.2 H128.6 V756.8 H126.2 V752.6 H119.8 V756.8 Z" fill="#39a7e6"/>
<!-- valentina -->
<rect x="161.2" y="736.6" width="21.6" height="21.6" rx="1" fill="#0e1233" stroke="#2c3154" stroke-width=".8"/>
<path d="M166 744.4 C166 740.6 169.6 740.2 170 743.6 L171.6 753.6 C174.2 750 176.2 744.6 175.8 740 C177.6 739.6 178.4 740.6 178.2 742.4 C177.4 747.2 175 752 172 755.2 L170.2 755.2 L168.6 744.6 C168.4 743.2 167.2 743.2 167.2 744.6 Z" fill="#fff"/>
<!-- chrome -->
<circle cx="220.9" cy="747.8" r="11.2" fill="#db4437"/>
<path d="M220.9 747.8 L211.2 742.2 A11.2 11.2 0 0 0 221.6 759 L226.6 750 Z" fill="#1ea362"/>
<path d="M220.9 747.8 L231.4 743.8 A11.2 11.2 0 0 1 221.4 759 L226.8 749.4 Z" fill="#ffcd40"/>
<path d="M211.2 742.2 A11.2 11.2 0 0 1 231.5 744 H220.9 Z" fill="#db4437"/>
<circle cx="220.9" cy="747.8" r="5.2" fill="#fff"/>
<circle cx="220.9" cy="747.8" r="4.1" fill="#4285f4"/>
<!-- tray chevron -->
<path d="M1121.2 750.8 L1127 745.2 L1132.8 750.8" fill="none" stroke="#fff" stroke-width="1.2"/>
<!-- battery -->
<g fill="none" stroke="#fff" stroke-width="1.1">
<path d="M1148.6 744.6 H1157.6 V752.6 H1147.6"/>
<path d="M1157.6 746.8 H1158.8 V750.4 H1157.6"/>
<path d="M1144 744.6 H1147.6 V748 Q1147.6 750 1145.8 750 Q1144 750 1144 748 Z M1145 742.4 V744.6 M1146.6 742.4 V744.6 M1145.8 750 V752.8"/>
</g>
<rect x="1148.2" y="748.6" width="2.2" height="3.4" fill="#fff"/>
<!-- volume -->
<g fill="none" stroke="#fff" stroke-width="1.1">
<path d="M1167.2 746 H1169.6 L1172.8 743 V753.4 L1169.6 750.4 H1167.2 Z"/>
<path d="M1175 745.8 Q1176.8 748.2 1175 750.6"/>
<path d="M1177.4 744 Q1180.4 748.2 1177.4 752.4"/>
<path d="M1179.8 742.2 Q1184 748.2 1179.8 754.2"/>
</g>
<!-- wifi -->
<g fill="none" stroke="#fff" stroke-width="1.2">
<path d="M1194.4 754.4 A11.4 11.4 0 0 1 1205.8 743"/>
<path d="M1197.6 754.4 A8.2 8.2 0 0 1 1205.8 746.2" stroke="#ddd"/>
<path d="M1200.8 754.4 A5 5 0 0 1 1205.8 749.4"/>
</g>
<circle cx="1204.8" cy="753.4" r="1.5" fill="#fff"/>
<!-- notifications -->
<path d="M1325.6 741 H1340.4 V751.6 H1335.4 L1333 754.2 L1330.6 751.6 H1325.6 Z" fill="none" stroke="#fff" stroke-width="1.2"/>
</svg>

<!-- TEXT -->
<span class="t" style="left:22.9px;top:5.8px;font-size:12px;color:#000;transform:scaleX(1.0056)">pattern dufflecoat.val* [Юлия Свирская.vit] - Valentina</span>
<span class="t" style="left:8.0px;top:27.8px;font-size:12px;color:#000;transform:scaleX(0.9500)">File</span>
<span class="t" style="left:41.9px;top:27.8px;font-size:12px;color:#000;transform:scaleX(0.9870)">Pattern piece</span>
<span class="t" style="left:127.3px;top:27.8px;font-size:12px;color:#000;transform:scaleX(1.0138)">Mode</span>
<span class="t" style="left:174.1px;top:27.8px;font-size:12px;color:#000;transform:scaleX(0.9808)">Measurements</span>
<span class="t" style="left:268.0px;top:27.8px;font-size:12px;color:#000;transform:scaleX(1.0139)">History</span>
<span class="t" style="left:323.1px;top:27.8px;font-size:12px;color:#000;transform:scaleX(0.9930)">Window</span>
<span class="t" style="left:382.1px;top:27.8px;font-size:12px;color:#000;transform:scaleX(1.0174)">Help</span>
<span class="t" style="left:17.2px;top:78.5px;font-size:13px;color:#000;transform:scaleX(0.9280)">New</span>
<span class="t" style="left:57.2px;top:78.5px;font-size:13px;color:#000;transform:scaleX(0.9433)">Open</span>
<span class="t" style="left:102.3px;top:78.5px;font-size:13px;color:#000;transform:scaleX(0.9357)">Save</span>
<span class="t" style="left:145.7px;top:78.5px;font-size:13px;color:#787878;transform:scaleX(0.9071)">Sync</span>
<span class="t" style="left:199.6px;top:78.5px;font-size:13px;color:#000;transform:scaleX(1.0069)">Draw</span>
<span class="t" style="left:268.0px;top:78.5px;font-size:13px;color:#000;transform:scaleX(0.9737)">Details</span>
<span class="t" style="left:345.2px;top:78.5px;font-size:13px;color:#000;transform:scaleX(0.9316)">Layout</span>
<span class="t" style="left:408.6px;top:78.5px;font-size:13px;color:#000;transform:scaleX(1.0010)">New pattern piece</span>
<span class="t" style="left:520.6px;top:64.5px;font-size:13px;color:#000;transform:scaleX(0.9763)">Pattern Piece:</span>
<span class="t" style="left:604.8px;top:64.5px;font-size:13px;color:#000;transform:scaleX(0.9588)">Выкройка 1</span>
<span class="t" style="left:713.4px;top:78.5px;font-size:13px;color:#000;transform:scaleX(0.9826)">Zoom in</span>
<span class="t" style="left:774.6px;top:78.5px;font-size:13px;color:#000;transform:scaleX(0.9709)">Zoom out</span>
<span class="t" style="left:843.5px;top:78.5px;font-size:13px;color:#000;transform:scaleX(0.9933)">Zoom fit best</span>
<span class="t" style="left:932.5px;top:78.5px;font-size:13px;color:#787878;transform:scaleX(0.9910)">Undo add detail</span>
<span class="t" style="left:1036.7px;top:78.5px;font-size:13px;color:#787878;transform:scaleX(0.9433)">Redo</span>
<span class="t" style="left:36.1px;top:114.8px;font-size:13px;color:#000;transform:scaleX(0.9172)">Point</span>
<span class="t" style="left:36.1px;top:144.8px;font-size:13px;color:#000;transform:scaleX(0.9478)">Line</span>
<span class="t" style="left:36.0px;top:174.8px;font-size:13px;color:#000;transform:scaleX(0.9636)">Curve</span>
<span class="t" style="left:37.0px;top:204.8px;font-size:13px;color:#000;transform:scaleX(0.9474)">Arc</span>
<span class="t" style="left:36.0px;top:234.8px;font-size:13px;color:#000;transform:scaleX(0.9884)">Elliptical Arc</span>
<span class="t" style="left:36.0px;top:264.8px;font-size:13px;color:#000;transform:scaleX(0.9887)">Operations</span>
<span class="t" style="left:36.0px;top:294.8px;font-size:13px;color:#000;transform:scaleX(1.0000)">Detail</span>
<span class="t" style="left:35.8px;top:658.9px;font-size:13px;color:#000;transform:scaleX(0.9526)">Layout</span>
<span class="t" style="left:1246.5px;top:104.9px;font-size:11px;color:#000;transform:scaleX(0.9793)">Tool options</span>
<span class="t" style="left:1245.0px;top:583.7px;font-size:11px;color:#000;transform:scaleX(0.9793)">Group</span>
<span class="t" style="left:9.3px;top:691.5px;font-size:13px;color:#000;transform:scaleX(1.0509)">33, 7 (cm)</span>
<span class="t" style="left:1.6px;top:713.1px;font-size:12px;color:#000;transform:scaleX(0.9900)">Select main path objects clockwise, <b>Shift</b> - reverse direction curve, <b>Enter</b> - finish creation</span>
<span class="t" style="left:1218.0px;top:741.5px;font-size:12px;color:#fff;transform:scaleX(0.9455)">РУС</span>
<span class="t" style="left:1266.4px;top:732.5px;font-size:12px;color:#fff;transform:scaleX(0.8586)">15:41</span>
<span class="t" style="left:1253.1px;top:750.3px;font-size:12px;color:#fff;transform:scaleX(0.8949)">21.08.2017</span>
</body>
</html>
